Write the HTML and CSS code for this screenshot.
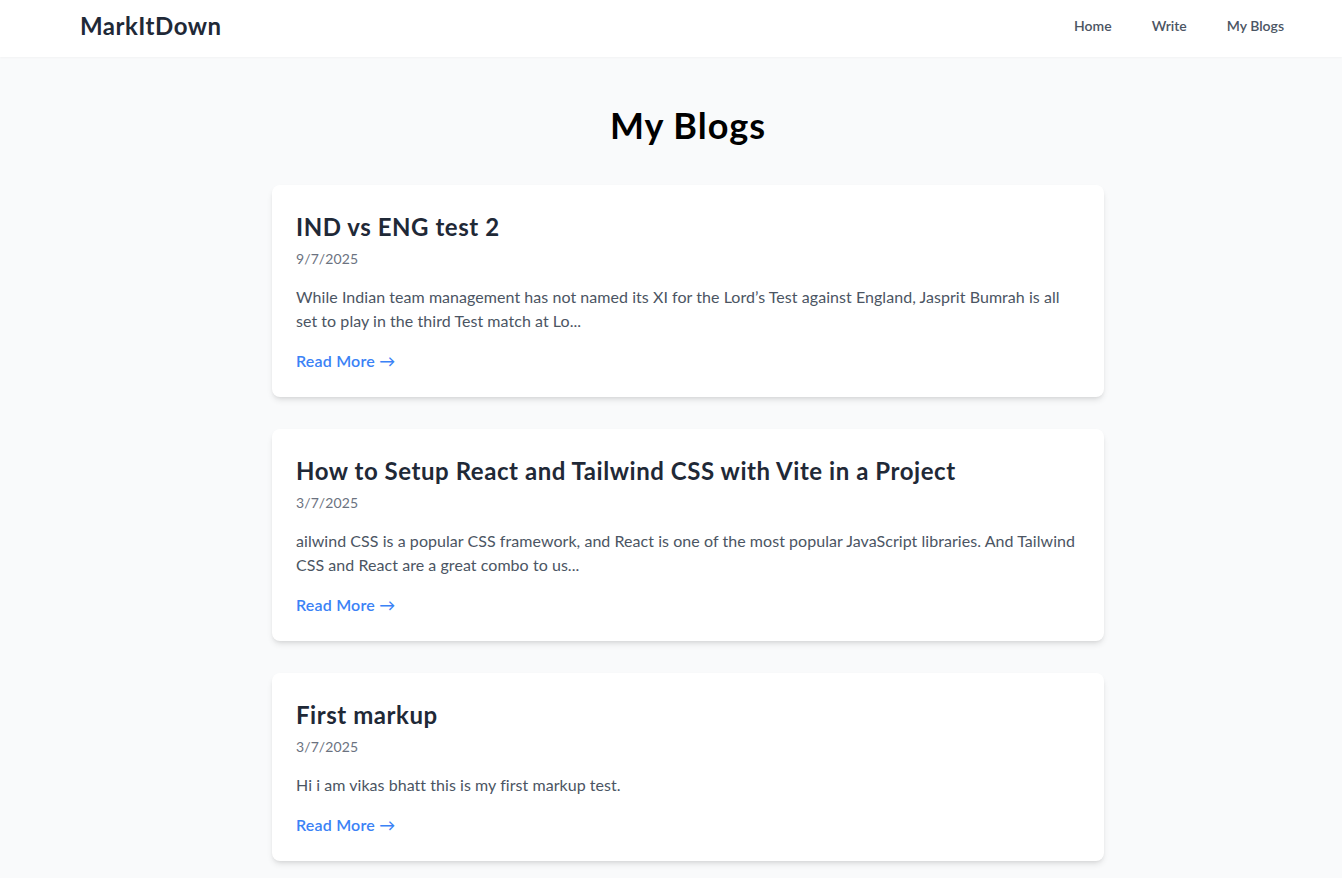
FILE: index.html
```html
<!DOCTYPE html>
<html lang="en">
<head>
<meta charset="utf-8">
<title>MarkItDown - My Blogs</title>
<link rel="stylesheet" href="styles.css">
</head>
<body>
<header class="navbar">
  <a class="logo" href="#">MarkItDown</a>
  <nav class="nav-links">
    <a href="#">Home</a>
    <a href="#">Write</a>
    <a href="#">My Blogs</a>
  </nav>
</header>
<main class="page">
  <h1 class="page-title">My Blogs</h1>
  <div class="blog-list">
    <article class="card">
      <h2 class="card-title">IND vs ENG test 2</h2>
      <p class="card-date">9/7/2025</p>
      <p class="card-excerpt">While Indian team management has not named its XI for the Lord’s Test against England, Jasprit Bumrah is all set to play in the third Test match at Lo...</p>
      <a class="read-more" href="#">Read More →</a>
    </article>
    <article class="card">
      <h2 class="card-title">How to Setup React and Tailwind CSS with Vite in a Project</h2>
      <p class="card-date">3/7/2025</p>
      <p class="card-excerpt">ailwind CSS is a popular CSS framework, and React is one of the most popular JavaScript libraries. And Tailwind CSS and React are a great combo to us...</p>
      <a class="read-more" href="#">Read More →</a>
    </article>
    <article class="card">
      <h2 class="card-title">First markup</h2>
      <p class="card-date">3/7/2025</p>
      <p class="card-excerpt">Hi i am vikas bhatt this is my first markup test.</p>
      <a class="read-more" href="#">Read More →</a>
    </article>
  </div>
</main>
</body>
</html>
```
FILE: styles.css
```css
* { box-sizing: border-box; }
html, body {
  margin: 0;
  padding: 0;
}
body {
  font-family: Lato, "Noto Sans", "Open Sans", sans-serif;
  background: #f9fafb;
  color: #111827;
  min-height: 100vh;
}
a { text-decoration: none; }

.navbar {
  height: 57px;
  background: #ffffff;
  display: flex;
  align-items: center;
  justify-content: space-between;
  padding: 0 58px 5px 80px;
  box-shadow: 0 1px 2px rgba(0,0,0,0.03);
}
.logo {
  font-size: 24px;
  font-weight: 700;
  letter-spacing: 0.5px;
  color: #1f2937;
  line-height: 32px;
}
.nav-links {
  display: flex;
  gap: 40px;
}
.nav-links a {
  font-size: 14px;
  font-weight: 600;
  color: #4b5563;
  line-height: 20px;
}

.page {
  max-width: 866px;
  margin: 0 auto;
  padding: 48px 0 16px 34px;
}
.page-title {
  margin: 0 0 40px;
  text-align: center;
  font-size: 36px;
  line-height: 40px;
  font-weight: 700;
  letter-spacing: 1px;
  color: #000000;
}
.blog-list {
  display: flex;
  flex-direction: column;
  gap: 32px;
}
.card {
  background: #ffffff;
  border-radius: 8px;
  padding: 24px;
  box-shadow: 0 4px 6px -1px rgba(0,0,0,0.1), 0 2px 4px -2px rgba(0,0,0,0.1);
}
.card-title {
  margin: 2px 0 6px;
  font-size: 24px;
  line-height: 32px;
  font-weight: 700;
  letter-spacing: 0.55px;
  color: #1f2937;
}
.card-date {
  margin: 0 0 16px;
  font-size: 14px;
  line-height: 20px;
  letter-spacing: 0.1px;
  color: #6b7280;
}
.card-excerpt {
  margin: 0 0 16px;
  font-size: 16px;
  line-height: 24px;
  letter-spacing: 0.05px;
  color: #4b5563;
}
.read-more {
  display: block;
  font-size: 16px;
  line-height: 24px;
  font-weight: 600;
  letter-spacing: 0.2px;
  color: #3b82f6;
}
```
